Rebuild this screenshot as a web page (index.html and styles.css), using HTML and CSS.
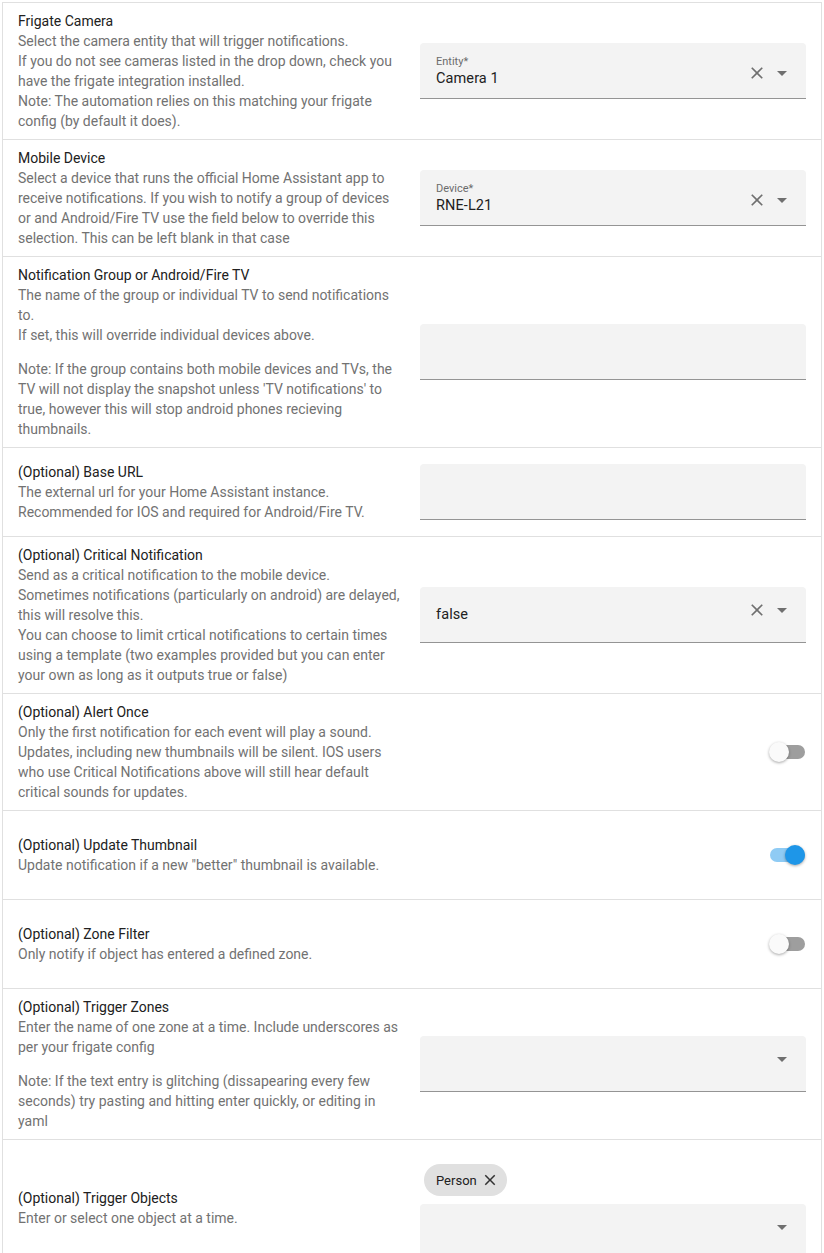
FILE: index.html
```html
<!DOCTYPE html>
<html>
<head>
<meta charset="utf-8">
<link rel="stylesheet" href="styles.css">
</head>
<body>
<div class="card">

  <div class="row">
    <div class="info">
      <div class="name">Frigate Camera</div>
      <div class="desc">Select the camera entity that will trigger notifications.<br>If you do not see cameras listed in the drop down, check you have the frigate integration installed.<br>Note: The automation relies on this matching your frigate config (by default it does).</div>
    </div>
    <div class="control">
      <div class="field">
        <div class="field-text labelled">
          <span class="label">Entity*</span>
          <span class="value">Camera 1</span>
        </div>
        <div class="icons low">
          <svg class="ic-close" viewBox="0 0 24 24"><path d="M19,6.41L17.59,5L12,10.59L6.41,5L5,6.41L10.59,12L5,17.59L6.41,19L12,13.41L17.59,19L19,17.59L13.41,12L19,6.41Z"/></svg>
          <svg class="ic-arrow" viewBox="0 0 24 24"><path d="M7,10L12,15L17,10H7Z"/></svg>
        </div>
      </div>
    </div>
  </div>

  <div class="row">
    <div class="info">
      <div class="name">Mobile Device</div>
      <div class="desc">Select a device that runs the official Home Assistant app to receive notifications. If you wish to notify a group of devices or and Android/Fire TV use the field below to override this selection. This can be left blank in that case</div>
    </div>
    <div class="control">
      <div class="field">
        <div class="field-text labelled">
          <span class="label">Device*</span>
          <span class="value">RNE-L21</span>
        </div>
        <div class="icons low">
          <svg class="ic-close" viewBox="0 0 24 24"><path d="M19,6.41L17.59,5L12,10.59L6.41,5L5,6.41L10.59,12L5,17.59L6.41,19L12,13.41L17.59,19L19,17.59L13.41,12L19,6.41Z"/></svg>
          <svg class="ic-arrow" viewBox="0 0 24 24"><path d="M7,10L12,15L17,10H7Z"/></svg>
        </div>
      </div>
    </div>
  </div>

  <div class="row">
    <div class="info">
      <div class="name">Notification Group or Android/Fire TV</div>
      <div class="desc">The name of the group or individual TV to send notifications to.<br>If set, this will override individual devices above.</div>
      <div class="gap"></div>
      <div class="desc">Note: If the group contains both mobile devices and TVs, the TV will not display the snapshot unless 'TV notifications' to true, however this will stop android phones recieving thumbnails.</div>
    </div>
    <div class="control">
      <div class="field"></div>
    </div>
  </div>

  <div class="row">
    <div class="info">
      <div class="name">(Optional) Base URL</div>
      <div class="desc">The external url for your Home Assistant instance.<br>Recommended for IOS and required for Android/Fire TV.</div>
    </div>
    <div class="control">
      <div class="field"></div>
    </div>
  </div>

  <div class="row">
    <div class="info">
      <div class="name">(Optional) Critical Notification</div>
      <div class="desc">Send as a critical notification to the mobile device.<br>Sometimes notifications (particularly on android) are delayed, this will resolve this.<br>You can choose to limit crtical notifications to certain times using a template (two examples provided but you can enter your own as long as it outputs true or false)</div>
    </div>
    <div class="control">
      <div class="field">
        <div class="field-text">
          <span class="value">false</span>
        </div>
        <div class="icons">
          <svg class="ic-close" viewBox="0 0 24 24"><path d="M19,6.41L17.59,5L12,10.59L6.41,5L5,6.41L10.59,12L5,17.59L6.41,19L12,13.41L17.59,19L19,17.59L13.41,12L19,6.41Z"/></svg>
          <svg class="ic-arrow" viewBox="0 0 24 24"><path d="M7,10L12,15L17,10H7Z"/></svg>
        </div>
      </div>
    </div>
  </div>

  <div class="row">
    <div class="info">
      <div class="name">(Optional) Alert Once</div>
      <div class="desc">Only the first notification for each event will play a sound.<br>Updates, including new thumbnails will be silent. IOS users who use Critical Notifications above will still hear default critical sounds for updates.</div>
    </div>
    <div class="control end">
      <div class="switch"><span class="track"></span><span class="thumb"></span></div>
    </div>
  </div>

  <div class="row">
    <div class="info">
      <div class="name">(Optional) Update Thumbnail</div>
      <div class="desc">Update notification if a new "better" thumbnail is available.</div>
    </div>
    <div class="control end">
      <div class="switch on"><span class="track"></span><span class="thumb"></span></div>
    </div>
  </div>

  <div class="row">
    <div class="info">
      <div class="name">(Optional) Zone Filter</div>
      <div class="desc">Only notify if object has entered a defined zone.</div>
    </div>
    <div class="control end">
      <div class="switch"><span class="track"></span><span class="thumb"></span></div>
    </div>
  </div>

  <div class="row">
    <div class="info">
      <div class="name">(Optional) Trigger Zones</div>
      <div class="desc">Enter the name of one zone at a time. Include underscores as per your frigate config</div>
      <div class="gap"></div>
      <div class="desc">Note: If the text entry is glitching (dissapearing every few seconds) try pasting and hitting enter quickly, or editing in yaml</div>
    </div>
    <div class="control">
      <div class="field">
        <div class="field-text"></div>
        <div class="icons">
          <svg class="ic-arrow" viewBox="0 0 24 24"><path d="M7,10L12,15L17,10H7Z"/></svg>
        </div>
      </div>
    </div>
  </div>

  <div class="row">
    <div class="info">
      <div class="name">(Optional) Trigger Objects</div>
      <div class="desc">Enter or select one object at a time.</div>
    </div>
    <div class="control">
      <div class="chips">
        <span class="chip">Person<svg class="chip-x" viewBox="0 0 24 24"><path d="M19,6.41L17.59,5L12,10.59L6.41,5L5,6.41L10.59,12L5,17.59L6.41,19L12,13.41L17.59,19L19,17.59L13.41,12L19,6.41Z"/></svg></span>
      </div>
      <div class="field after-chips">
        <div class="field-text"></div>
        <div class="icons">
          <svg class="ic-arrow" viewBox="0 0 24 24"><path d="M7,10L12,15L17,10H7Z"/></svg>
        </div>
      </div>
    </div>
  </div>

</div>
</body>
</html>
```
FILE: styles.css
```css
html, body {
  margin: 0;
  padding: 0;
  background: #ffffff;
}

body {
  font-family: Roboto, "Liberation Sans", Arial, sans-serif;
  color: #212121;
}

.card {
  margin: 2px 0 0 2px;
  width: 818px;
  border: 1px solid #e0e0e0;
  border-bottom: none;
  background: #ffffff;
}

.row {
  display: flex;
  align-items: center;
  gap: 16px;
  padding: 8px 15px;
  min-height: 72px;
  border-top: 1px solid #e0e0e0;
}

.row:first-child {
  border-top: none;
}

.info {
  flex: 1 1 0;
  min-width: 0;
  font-size: 14px;
  line-height: 20px;
}

.name {
  color: #212121;
}

.desc {
  color: #727272;
}

.gap {
  height: 14px;
}

.control {
  flex: 1 1 0;
  min-width: 0;
  padding: 8px 0;
  display: flex;
  flex-direction: column;
  align-items: stretch;
}

.control.end {
  align-items: flex-end;
}

.field {
  height: 56px;
  box-sizing: border-box;
  background: #f3f3f3;
  border-radius: 4px 4px 0 0;
  border-bottom: 1px solid #949494;
  display: flex;
  align-items: center;
}

.field.after-chips {
  margin-top: 8px;
}

.field-text {
  flex: 1 1 auto;
  padding-left: 16px;
  display: flex;
  flex-direction: column;
}

.field-text.labelled {
  padding-top: 2px;
}

.label {
  font-size: 11px;
  line-height: 14px;
  color: #6b6b6b;
}

.value {
  font-size: 14.5px;
  line-height: 20px;
  color: #212121;
  letter-spacing: 0.1px;
}

.icons {
  display: flex;
  align-items: center;
  padding-right: 12px;
  padding-bottom: 9px;
}

.icons.low {
  padding-top: 4px;
  padding-bottom: 0;
}

.ic-close {
  width: 20px;
  height: 20px;
  fill: #6f6f6f;
  margin-right: 3px;
}

.ic-arrow {
  width: 24px;
  height: 24px;
  fill: #6f6f6f;
}

.chips {
  margin: 8px 4px 0;
  display: flex;
}

.chip {
  display: inline-flex;
  align-items: center;
  height: 32px;
  padding: 0 8px 0 12px;
  border-radius: 16px;
  background: #e0e0e0;
  font-size: 13px;
  color: #212121;
}

.chip-x {
  width: 18px;
  height: 18px;
  margin-left: 4px;
  fill: #333333;
}

.switch {
  position: relative;
  width: 36px;
  height: 20px;
  margin-right: 1px;
}

.switch .track {
  position: absolute;
  left: 1px;
  right: 0;
  top: 3px;
  height: 14px;
  border-radius: 7px;
  background: #9e9e9e;
}

.switch .thumb {
  position: absolute;
  left: 0;
  top: 0;
  width: 20px;
  height: 20px;
  border-radius: 50%;
  background: #fafafa;
  box-shadow: 0 1px 3px rgba(0, 0, 0, 0.35);
}

.switch.on .track {
  background: #8fcbf4;
}

.switch.on .thumb {
  left: 16px;
  background: #1e96e8;
}
```
